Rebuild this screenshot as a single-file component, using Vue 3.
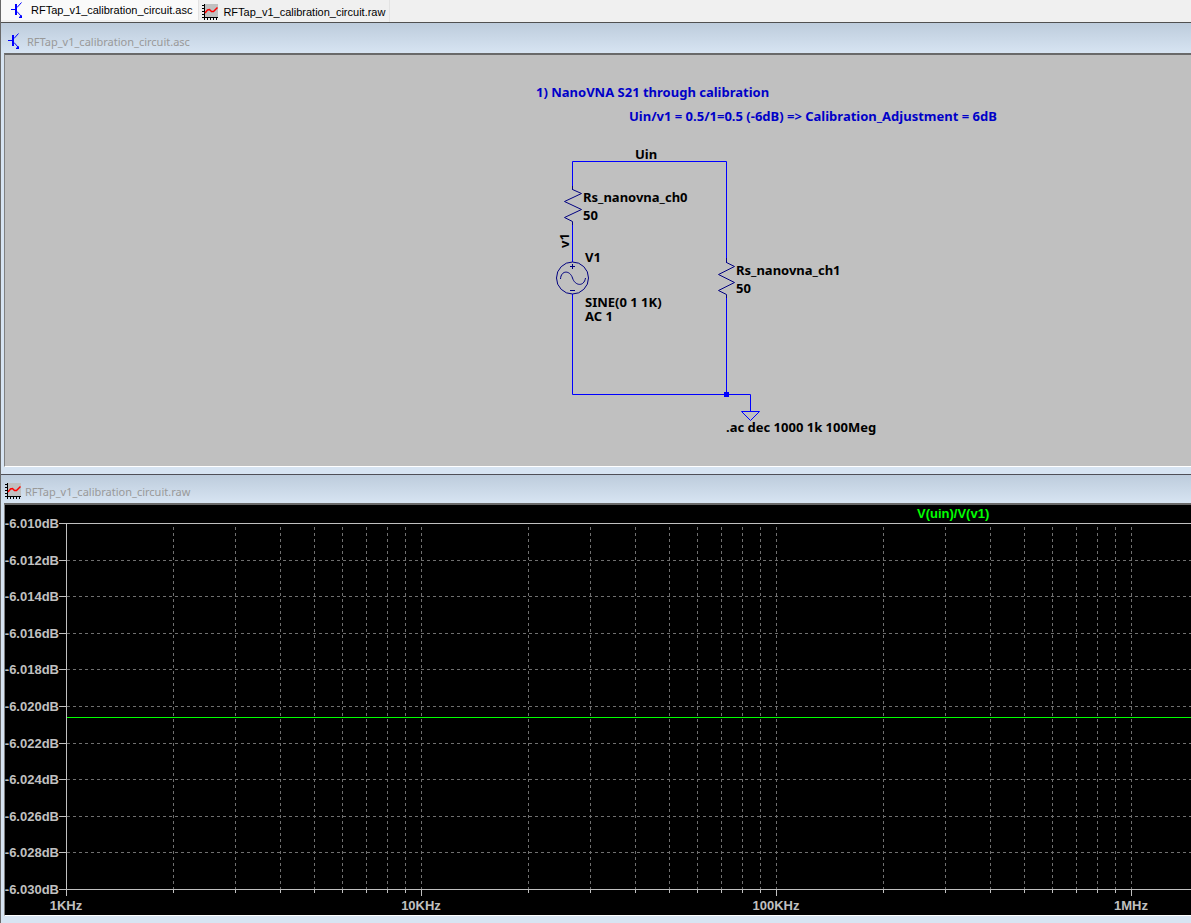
<script setup>
const decades = [0, 1, 2, 3]
const decadeWidth = 355
const left = 61
const top = 18
const rowStep = 36.6
const gridX = []
for (const d of decades) {
  for (let k = 1; k < 10; k++) {
    const x = Math.round(left + (d + Math.log10(k)) * decadeWidth)
    if (k === 1 && d === 0) continue
    gridX.push({ x, major: k === 1 })
    if (d === 3) break
  }
}
const rows = Array.from({ length: 11 }, (_, i) => ({
  y: Math.round(top + i * rowStep),
  label: `-6.0${10 + i * 2}dB`,
}))
const freqs = ['1KHz', '10KHz', '100KHz', '1MHz'].map((label, i) => ({ label, x: left + i * decadeWidth }))
</script>

<template>
  <main class="app">
    <nav class="tabs" aria-label="Open documents">
      <button class="tab active" type="button">
        <svg class="icon" viewBox="0 0 16 16"><use href="#npn" /></svg>
        <span>RFTap_v1_calibration_circuit.asc</span>
      </button>
      <button class="tab second" type="button">
        <svg class="icon" viewBox="0 0 16 16"><use href="#wave" /></svg>
        <span>RFTap_v1_calibration_circuit.raw</span>
      </button>
    </nav>

    <section class="window upper">
      <header class="title schematic-title">
        <svg class="icon" viewBox="0 0 16 16"><use href="#npn" /></svg>
        <span>RFTap_v1_calibration_circuit.asc</span>
      </header>
      <div class="client schematic">
        <svg class="canvas" role="img" aria-label="Calibration circuit schematic">
          <g transform="translate(-5 -55)">
            <g class="wire">
              <path d="M572.5 190V161.5H726.5V263M572.5 224V262M572.5 294V394.5H750.5V411M726.5 297V394" />
              <path d="M741.5 411.5H759.5L750.5 420.5Z" />
              <rect x="724.5" y="392.5" width="4" height="4" class="joint" />
            </g>
            <g class="part">
              <path d="M572.5 186V189.5L581.5 193.5L564.5 201.5L581.5 209.5L564.5 217.5L572.5 221.5V225" />
              <path d="M726.5 258V262.5L734.5 266.5L718.5 274.5L734.5 282.5L718.5 290.5L726.5 294.5V298" />
              <circle cx="572.5" cy="278" r="16" />
              <path d="M570 266.5H575M572.5 264V269M570 290.5H575" />
              <path d="M560.5 279C561 270 570 270 572.5 278S584 287 585.5 278" />
            </g>
            <g class="note">
              <text x="536" y="97">1) NanoVNA S21 through calibration</text>
              <text x="629" y="121">Uin/v1 = 0.5/1=0.5 (-6dB) =&gt; Calibration_Adjustment = 6dB</text>
            </g>
            <g class="label">
              <text x="635" y="159">Uin</text>
              <text x="583" y="202">Rs_nanovna_ch0</text>
              <text x="583" y="220">50</text>
              <text transform="translate(569 248) rotate(-90)">v1</text>
              <text x="585" y="262">V1</text>
              <text y="307"><tspan x="585">SINE(0 1 1K)</tspan><tspan x="585" dy="14">AC 1</tspan></text>
              <text x="736" y="275">Rs_nanovna_ch1</text>
              <text x="736" y="293">50</text>
              <text x="726" y="432">.ac dec 1000 1k 100Meg</text>
            </g>
          </g>
        </svg>
      </div>
    </section>

    <section class="window lower">
      <header class="title plot-title">
        <svg class="icon" viewBox="0 0 16 16"><use href="#wave" /></svg>
        <span>RFTap_v1_calibration_circuit.raw</span>
      </header>
      <div class="client plot">
        <svg class="canvas" role="img" aria-label="V(uin)/V(v1) frequency response">
          <g class="grid">
            <line v-for="g in gridX" :key="g.x" :x1="g.x + 0.5" :x2="g.x + 0.5" y1="22" y2="384" />
            <line v-for="r in rows.slice(1, -1)" :key="r.y" x1="62" x2="100%" :y1="r.y + 0.5" :y2="r.y + 0.5" />
          </g>
          <g class="axis">
            <line x1="61.5" x2="61.5" y1="18" y2="391" />
            <line v-for="(r, i) in rows" :key="r.y" x1="54" :x2="i % 10 ? 61 : '100%'" :y1="r.y + 0.5" :y2="r.y + 0.5" />
            <line v-for="g in gridX" :key="g.x" :x1="g.x + 0.5" :x2="g.x + 0.5" y1="384" :y2="g.major ? 391 : 388" />
          </g>
          <line class="trace" x1="62" x2="100%" y1="212.5" y2="212.5" />
          <g class="scale">
            <text v-for="r in rows" :key="r.y" x="54" :y="r.y + 5" text-anchor="end">{{ r.label }}</text>
            <text v-for="f in freqs" :key="f.x" :x="f.x" y="405" text-anchor="middle">{{ f.label }}</text>
          </g>
          <text class="legend" x="912" y="13">V(uin)/V(v1)</text>
        </svg>
      </div>
    </section>

    <svg class="defs" aria-hidden="true">
      <symbol id="npn" viewBox="0 0 16 16">
        <path d="M1 7.5H5M7 5.5L11.5 0.5M7 9.5L11 14" fill="none" stroke="#0000ff" />
        <path d="M5 2H7V13H5ZM12 13V16H9V15Z" fill="#0000ff" />
      </symbol>
      <symbol id="wave" viewBox="0 0 16 16">
        <path d="M2 0H16V13H2Z" fill="#c0c0c0" />
        <path d="M2.5 0V16M0 13.5H16M0 1.5H2M0 4.5H2M0 7.5H2M0 10.5H2M5.5 14V16M8.5 14V16M11.5 14V16M14.5 14V16" fill="none" stroke="#000" />
        <path d="M3 9L5.5 6L7.5 5.5L9.5 7.5H11.5L15.5 3.5" fill="none" stroke="#ff0000" stroke-width="1.5" />
      </symbol>
    </svg>
  </main>
</template>

<style>
body { margin: 0; }
</style>

<style scoped>
.app { display: flex; flex-direction: column; min-height: 100vh; box-sizing: border-box; background: #d7e4f2; border-left: 1px solid #696969; }
.tabs { display: flex; height: 22px; background: #f0f0f0; border-bottom: 1px solid #505050; }
.tab { display: flex; align-items: center; gap: 5px; margin: 0; padding: 0 6px 0 9px; border: 0; border-right: 1px solid #e3e3e3; background: #f0f0f0; color: #000; font: 11px "Liberation Sans", Arial, sans-serif; white-space: nowrap; }
.tab.active { background: #fafafa; height: 20px; }
.tab.second { padding: 2px 4px 0 3px; }
.icon { width: 16px; height: 16px; flex: none; }
.window { display: flex; flex-direction: column; box-sizing: border-box; }
.upper { border-bottom: 1px solid #4f4f57; padding-bottom: 7px; }
.lower { flex: 1; padding-bottom: 7px; }
.title { display: flex; align-items: center; gap: 4px; box-sizing: border-box; padding-left: 6px; color: #999; background: linear-gradient(#bdccdc, #d7e4f2); font: 11px "Noto Sans", sans-serif; white-space: nowrap; }
.schematic-title { height: 30px; padding-top: 6px; }
.plot-title { height: 28px; padding-top: 4px; padding-left: 4px; }
.client { display: flex; margin-left: 3px; border: solid; border-width: 2px 0 1px 1px; border-color: #696969 #fff #fff #808080; overflow: hidden; }
.schematic { height: 411px; background: #c0c0c0; }
.plot { flex: 1; min-height: 410px; background: #000; }
.canvas { display: block; flex: 1; width: 100%; height: auto; min-width: 0; }
.wire { fill: none; stroke: #0000ff; }
.wire .joint { fill: #0000ff; }
.part { fill: none; stroke: #000080; }
.note, .label { font: bold 13px "Noto Sans", sans-serif; }
.note { fill: #0000c8; }
.label { fill: #000; }
.grid { stroke: #707070; stroke-dasharray: 3 3; }
.axis { stroke: #c0c0c0; }
.trace { stroke: #00ff00; }
.scale, .legend { font: bold 13px "Liberation Sans", Arial, sans-serif; fill: #c0c0c0; }
.legend { fill: #00ff00; }
.defs { position: absolute; width: 0; height: 0; }
</style>
